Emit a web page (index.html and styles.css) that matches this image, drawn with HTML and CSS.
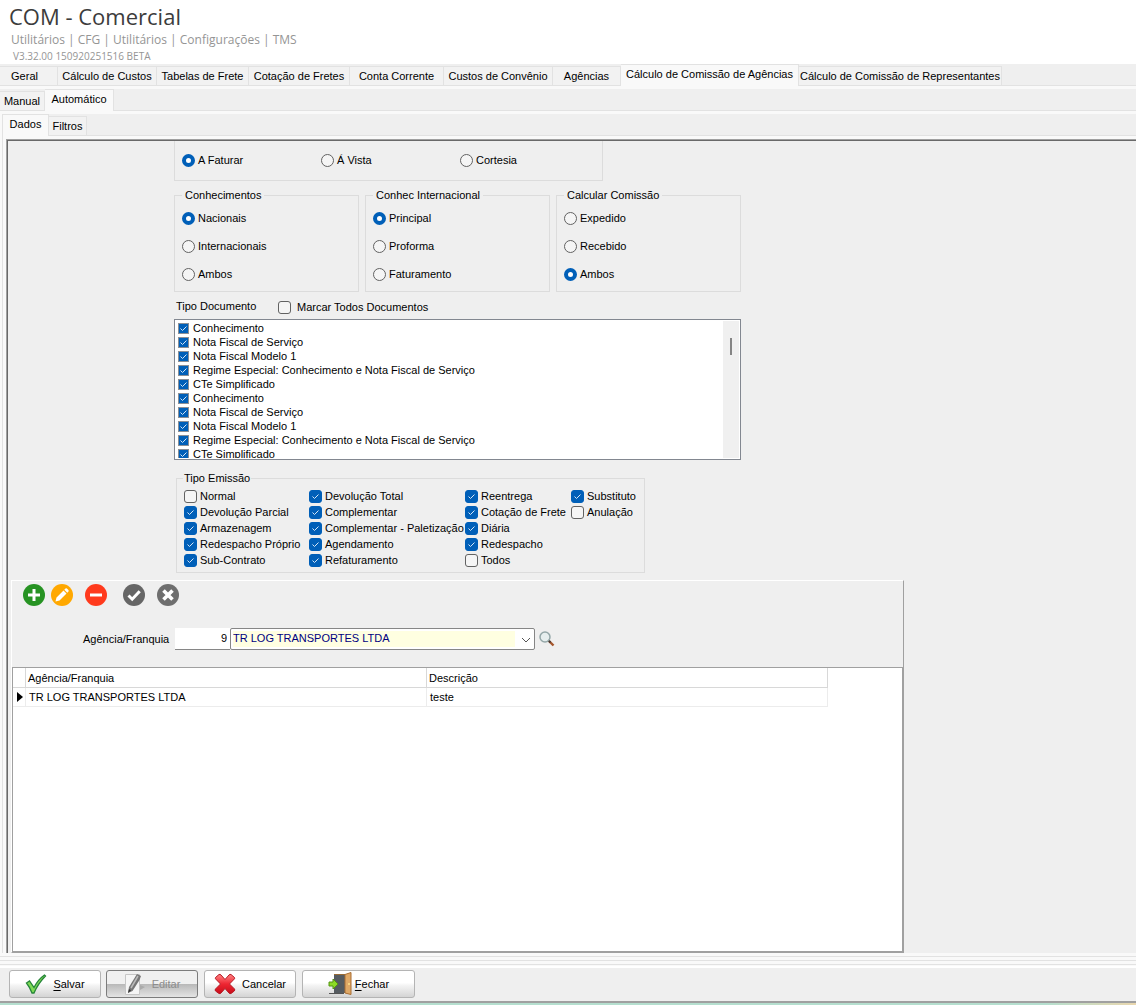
FILE: index.html
```html
<!DOCTYPE html>
<html lang="pt-BR">
<head>
    <meta charset="UTF-8">
    <meta name="viewport" content="width=device-width, initial-scale=1.0">
    <title>COM - Comercial</title>
    <link rel="stylesheet" href="styles.css">
</head>
<body>
    <header class="header">
        <h1>COM - Comercial</h1>
        <p class="path">Utilitários | CFG | Utilitários | Configurações | TMS</p>
        <p class="version">V3.32.00 150920251516 BETA</p>
    </header>

    <!-- Abas -->
    <nav class="tabs tabs-main">
        <button class="tab">Geral</button>
        <button class="tab">Cálculo de Custos</button>
        <button class="tab">Tabelas de Frete</button>
        <button class="tab">Cotação de Fretes</button>
        <button class="tab">Conta Corrente</button>
        <button class="tab">Custos de Convênio</button>
        <button class="tab">Agências</button>
        <button class="tab active">Cálculo de Comissão de Agências</button>
        <button class="tab">Cálculo de Comissão de Representantes</button>
    </nav>
    <nav class="tabs tabs-sub">
        <button class="tab">Manual</button>
        <button class="tab active">Automático</button>
    </nav>
    <div class="page">
        <nav class="tabs tabs-inner">
            <button class="tab active">Dados</button>
            <button class="tab">Filtros</button>
        </nav>

        <main class="panel">
            <div class="form">
                <div class="payment">
                    <label><input type="radio" name="pagamento" checked>A Faturar</label>
                    <label><input type="radio" name="pagamento">Á Vista</label>
                    <label><input type="radio" name="pagamento">Cortesia</label>
                </div>

                <div class="groups">
                    <fieldset class="group">
                        <legend>Conhecimentos</legend>
                        <label><input type="radio" name="conhecimentos" checked>Nacionais</label>
                        <label><input type="radio" name="conhecimentos">Internacionais</label>
                        <label><input type="radio" name="conhecimentos">Ambos</label>
                    </fieldset>
                    <fieldset class="group">
                        <legend>Conhec Internacional</legend>
                        <label><input type="radio" name="internacional" checked>Principal</label>
                        <label><input type="radio" name="internacional">Proforma</label>
                        <label><input type="radio" name="internacional">Faturamento</label>
                    </fieldset>
                    <fieldset class="group">
                        <legend>Calcular Comissão</legend>
                        <label><input type="radio" name="comissao">Expedido</label>
                        <label><input type="radio" name="comissao">Recebido</label>
                        <label><input type="radio" name="comissao" checked>Ambos</label>
                    </fieldset>
                </div>

                <div class="doc-head">
                    <span>Tipo Documento</span>
                    <label><input type="checkbox">Marcar Todos Documentos</label>
                </div>
                <div class="doc-list">
                    <div class="doc-items">
                        <label><input type="checkbox" checked>Conhecimento</label>
                        <label><input type="checkbox" checked>Nota Fiscal de Serviço</label>
                        <label><input type="checkbox" checked>Nota Fiscal Modelo 1</label>
                        <label><input type="checkbox" checked>Regime Especial: Conhecimento e Nota Fiscal de Serviço</label>
                        <label><input type="checkbox" checked>CTe Simplificado</label>
                        <label><input type="checkbox" checked>Conhecimento</label>
                        <label><input type="checkbox" checked>Nota Fiscal de Serviço</label>
                        <label><input type="checkbox" checked>Nota Fiscal Modelo 1</label>
                        <label><input type="checkbox" checked>Regime Especial: Conhecimento e Nota Fiscal de Serviço</label>
                        <label><input type="checkbox" checked>CTe Simplificado</label>
                    </div>
                    <div class="scrollbar"><div class="thumb"></div></div>
                </div>

                <fieldset class="emission">
                    <legend>Tipo Emissão</legend>
                    <div class="emission-grid">
                        <label><input type="checkbox">Normal</label>
                        <label><input type="checkbox" checked>Devolução Parcial</label>
                        <label><input type="checkbox" checked>Armazenagem</label>
                        <label><input type="checkbox" checked>Redespacho Próprio</label>
                        <label><input type="checkbox" checked>Sub-Contrato</label>
                        <label><input type="checkbox" checked>Devolução Total</label>
                        <label><input type="checkbox" checked>Complementar</label>
                        <label><input type="checkbox" checked>Complementar - Paletização</label>
                        <label><input type="checkbox" checked>Agendamento</label>
                        <label><input type="checkbox" checked>Refaturamento</label>
                        <label><input type="checkbox" checked>Reentrega</label>
                        <label><input type="checkbox" checked>Cotação de Frete</label>
                        <label><input type="checkbox" checked>Diária</label>
                        <label><input type="checkbox" checked>Redespacho</label>
                        <label><input type="checkbox">Todos</label>
                        <label><input type="checkbox" checked>Substituto</label>
                        <label><input type="checkbox">Anulação</label>
                    </div>
                </fieldset>
            </div>

            <!-- Agências -->
            <section class="agency">
                <div class="toolbar">
                    <button class="icon-btn" aria-label="Incluir">
                        <svg viewBox="0 0 22 22"><circle cx="11" cy="11" r="11" fill="#279323"/><path d="M11 5v12M5 11h12" stroke="#fff" stroke-width="3"/></svg>
                    </button>
                    <button class="icon-btn" aria-label="Alterar">
                        <svg viewBox="0 0 22 22"><circle cx="11" cy="11" r="11" fill="#ffa800"/><path d="M4.500 17.500l1-4 7-7 3 3-7 7zM13.300 5.700l1.200-1.200q.7-.5 1.400.1l1.500 1.500q.6.700.1 1.400l-1.200 1.200z" fill="#fff"/></svg>
                    </button>
                    <button class="icon-btn icon-remove" aria-label="Excluir">
                        <svg viewBox="0 0 22 22"><circle cx="11" cy="11" r="11" fill="#ff3a1d"/><path d="M5 11h12" stroke="#fff" stroke-width="3"/></svg>
                    </button>
                    <button class="icon-btn icon-confirm" aria-label="Confirmar">
                        <svg viewBox="0 0 22 22"><circle cx="11" cy="11" r="11" fill="#666"/><path d="M5.500 11.500l3.700 3.700 7.500-8" fill="none" stroke="#fff" stroke-width="3"/></svg>
                    </button>
                    <button class="icon-btn icon-cancel" aria-label="Desfazer">
                        <svg viewBox="0 0 22 22"><circle cx="11" cy="11" r="11" fill="#6e6e6e"/><path d="M6.500 6.500l9 9M15.500 6.500l-9 9" stroke="#fff" stroke-width="3.600"/></svg>
                    </button>
                </div>

                <div class="field">
                    <label for="codigo">Agência/Franquia</label>
                    <input class="code" id="codigo" type="text" value="9">
                    <div class="combo">
                        <select aria-label="Nome da agência">
                            <option>TR LOG TRANSPORTES LTDA</option>
                        </select>
                        <svg class="arrow" viewBox="0 0 10 6"><path d="M1 1l4 4 4-4" fill="none" stroke="#555"/></svg>
                    </div>
                    <button class="search" aria-label="Pesquisar">
                        <svg viewBox="0 0 16 16"><path d="M9.500 9.500l5 5" stroke="#a5562c" stroke-width="2.400"/><path d="M9 9l2.500 2.500" stroke="#4a3a35" stroke-width="2"/><circle cx="6" cy="6" r="5" fill="#e6eeee" stroke="#94a7a8" stroke-width="1.500"/></svg>
                    </button>
                </div>

                <div class="grid">
                    <table>
                        <thead>
                            <tr><th class="mark"></th><th>Agência/Franquia</th><th>Descrição</th></tr>
                        </thead>
                        <tbody>
                            <tr>
                                <td class="mark"><svg viewBox="0 0 6 10"><path d="M0 0l6 5-6 5z"/></svg></td>
                                <td>TR LOG TRANSPORTES LTDA</td>
                                <td>teste</td>
                            </tr>
                        </tbody>
                    </table>
                </div>
            </section>
        </main>
    </div>

    <div class="edges"></div>

    <footer class="footer">
        <button class="btn">
            <svg width="22" height="22" viewBox="0 0 22 22"><path d="M1.500 10l3-2 4.500 6.500Q13 6.500 19.500 2l1 1Q13 10.500 9 20H7Q5 14.500 1.500 10z" fill="#7fdb55" stroke="#26853a" stroke-width="1.300"/></svg>
            <span><u>S</u>alvar</span>
        </button>
        <button class="btn btn-disabled" disabled>
            <svg width="22" height="24" viewBox="0 0 22 24"><path d="M16 13l5 2-5 3z" fill="#aaa"/><path d="M1.500 2.500h14v20h-14z" fill="#f5f5f5" stroke="#c6c6c6"/><path d="M4 21l1-6 8-13 4 2-1.500 4-7 11z" fill="#777"/><path d="M7 16l7-12" stroke="#bbb" stroke-width="1.500"/><path d="M4 21l1-4 2 1.500z" fill="#333"/></svg>
            <span>Editar</span>
        </button>
        <button class="btn btn-cancel">
            <svg width="22" height="22" viewBox="0 0 22 22"><defs><linearGradient id="red" x2="0" y2="1"><stop stop-color="#ff8585"/><stop offset=".5" stop-color="#ee2632"/><stop offset="1" stop-color="#c80d1a"/></linearGradient></defs><path d="M1.500 4.500l3.500-3q1-.5 2 .5l4 4.500L15 2q1-1 2-.5l3.500 3q.5.800-.2 1.500L15.500 11l5 5q.7 1-.2 2L17 20.500q-1 .5-2-.5l-4-4.500L7 20q-1 1-2 .5L1.500 18q-.8-1 0-2l5-5-4.800-5q-.7-.7-.2-1.500z" fill="url(#red)" stroke="#b51a25"/></svg>
            <span>Cancelar</span>
        </button>
        <button class="btn btn-close">
            <svg width="24" height="24" viewBox="0 0 24 24"><path d="M1 21.500h15" stroke="#555"/><path d="M6 2h11v19H6z" fill="#555b60"/><path d="M6 2.500h11" stroke="#966a37"/><path d="M17 2.500l6-2v22l-6-1.500z" fill="#dfa866" stroke="#a86d32"/><circle cx="21" cy="12" r="1" fill="#ffe28a"/><path d="M1 10h4V7l5 5-5 5v-3H1z" fill="#8cdb25" stroke="#549414"/></svg>
            <span><u>F</u>echar</span>
        </button>
    </footer>
    <div class="strip"></div>
</body>
</html>
```

FILE: styles.css
```css
* {
    box-sizing: border-box;
}

body {
    font-family: "Liberation Sans", Arial, sans-serif;
    font-size: 11px;
    line-height: 14px;
    color: #000;
    background: #f9f9f9;
    margin: 0;
    display: flex;
    flex-direction: column;
    min-height: 100vh;
}

button,
input,
select {
    font: inherit;
    color: inherit;
    margin: 0;
}

/* Cabeçalho */
.header {
    height: 64px;
    padding: 2px 9px 0;
    background: #fff;
    font-family: "Open Sans", sans-serif;
}

.header h1 {
    margin: 0;
    font-size: 22px;
    line-height: 28px;
    font-weight: 400;
    color: #3c3c3c;
}

.header p {
    margin: 0;
    color: #959595;
}

.header .path {
    padding-left: 2px;
    font-size: 12px;
    line-height: 20px;
}

.header .version {
    padding-left: 4px;
    font-size: 10px;
    line-height: 12px;
}

/* Abas */
.tabs {
    display: grid;
    align-items: end;
    height: 22px;
    margin-bottom: 3px;
    background: #efefef;
    box-shadow: inset 0 -1px #e2e2e2;
}

.tabs-main {
    grid-template-columns: 58px 99px 92px 101px 94px 109px 68px 178px 203px;
}

.tabs-sub {
    grid-template-columns: 45px 69px;
}

.tabs-inner {
    grid-template-columns: 46px 38px;
}

.tab {
    height: 20px;
    padding: 0;
    border: 1px solid #e2e2e2;
    border-left: 0;
    background: #f2f2f2;
    white-space: nowrap;
}

.tab.active {
    height: 22px;
    padding-bottom: 3px;
    border-bottom: 0;
    background: #f9f9f9;
}

.tabs-main .tab:first-child {
    padding-right: 8px;
}

.page {
    flex: 1;
    display: flex;
    flex-direction: column;
    margin-left: 2px;
    border-left: 1px solid #e2e2e2;
}

/* Painel principal */
.panel {
    flex: 1;
    display: flex;
    flex-direction: column;
    margin-left: 3px;
    padding: 1px 0 0 1px;
    border-top: 1px solid #a0a0a0;
    border-left: 1px solid #a0a0a0;
    box-shadow: inset 1px 1px #696969;
    background: #efefef;
}

.form {
    width: 567px;
    margin-left: 166px;
}

.form label {
    display: flex;
    align-items: center;
    gap: 3px;
    white-space: nowrap;
}

fieldset {
    min-width: 0;
    margin: 0;
    border: 1px solid #dcdcdc;
}

legend {
    padding: 0 3px;
}

input[type="radio"],
input[type="checkbox"] {
    appearance: none;
    flex: none;
    width: 13px;
    height: 13px;
    border: 1px solid #626262;
    background: #f5f5f5;
}

input[type="radio"] {
    border-radius: 50%;
}

input[type="radio"]:checked {
    border: 4px solid #005fb8;
    background: #fff;
}

input[type="checkbox"] {
    border-radius: 3px;
}

input[type="checkbox"]:checked {
    border-color: #005fb8;
    background: #005fb8 url("data:image/svg+xml,%3Csvg xmlns='http://www.w3.org/2000/svg' viewBox='0 0 11 11'%3E%3Cpath d='M2.500 5.500l2 2 4-4' fill='none' stroke='%23d5e6f6'/%3E%3C/svg%3E") center / 11px 11px no-repeat;
}

.payment {
    display: grid;
    grid-template-columns: repeat(3, 139px);
    width: 429px;
    height: 40px;
    padding: 0 0 1px 7px;
    border: 1px solid #dcdcdc;
    border-top: 0;
}

.groups {
    display: grid;
    grid-template-columns: repeat(3, 1fr);
    gap: 6px;
    margin-top: 7px;
}

.group {
    height: 104px;
    padding: 2px 7px 0;
}

.group label {
    height: 28px;
}

.group legend,
.emission legend {
    line-height: 14px;
}

.doc-head {
    display: grid;
    grid-template-columns: 102px 1fr;
    height: 26px;
    padding: 7px 2px 0;
}

.doc-head label {
    height: 16px;
    gap: 6px;
}

.doc-list {
    display: flex;
    height: 141px;
    padding: 1px;
    border: 1px solid #828790;
    margin-top: 1px;
    background: #fff;
}

.doc-items {
    flex: 1;
    padding-left: 2px;
    overflow: hidden;
}

.doc-items label {
    height: 14px;
    gap: 4px;
}

.doc-items input[type="checkbox"] {
    width: 11px;
    height: 11px;
    border-radius: 0;
    border-color: #8a8f96;
}

.scrollbar {
    width: 16px;
    background: #f0f0f0;
}

.thumb {
    width: 2px;
    height: 17px;
    margin: 17px 0 0 7px;
    background: #858585;
}

.emission {
    width: 469px;
    height: 102px;
    margin: 11px 0 0 2px;
    padding: 3px 7px 0;
}

.emission legend {
    padding: 0 1px;
    margin-left: -1px;
}

.emission-grid {
    display: grid;
    grid-auto-flow: column;
    grid-template-rows: repeat(5, 16px);
    grid-template-columns: 125px 156px 106px 1fr;
}

/* Agências */
.agency {
    flex: 1;
    display: flex;
    flex-direction: column;
    width: 893px;
    margin: 7px 0 0 3px;
    border: 1px solid #fff;
    border-right-color: #a0a0a0;
    border-bottom-color: #a0a0a0;
}

.toolbar {
    display: flex;
    height: 47px;
    padding: 3px 0 0 11px;
}

.icon-btn,
.search {
    display: block;
    padding: 0;
    border: 0;
    background: none;
}

.icon-btn {
    width: 22px;
    height: 22px;
    margin-right: 6px;
}

.icon-btn svg,
.search svg {
    display: block;
}

.icon-remove {
    margin: 0 16px 0 6px;
}

.icon-confirm {
    margin-right: 12px;
}

.field {
    display: flex;
    align-items: center;
    height: 22px;
    padding-left: 71px;
}

.field label {
    width: 92px;
}

.code {
    width: 55px;
    height: 22px;
    padding: 0 3px 2px;
    border: 0;
    border-bottom: 1px solid #868686;
    background: #fff;
    text-align: right;
}

.combo {
    position: relative;
    width: 305px;
    height: 22px;
    padding: 2px;
    border: 1px solid #868686;
    border-radius: 2px;
    background: #fff;
}

.combo select {
    appearance: none;
    display: block;
    width: 100%;
    height: 16px;
    padding: 0 0 2px;
    border: 0;
    border-right: 17px solid #fff;
    border-radius: 0;
    background: #ffffe1;
    color: #000080;
    line-height: 14px;
}

.arrow {
    position: absolute;
    top: 8px;
    right: 3px;
    width: 10px;
    height: 6px;
    pointer-events: none;
}

.search {
    width: 16px;
    height: 16px;
    margin-left: 4px;
}

.grid {
    flex: 1;
    margin-top: 17px;
    border: 1px solid #a0a0a0;
    background: #fff;
}

.grid table {
    width: 815px;
    table-layout: fixed;
    border-collapse: separate;
    border-spacing: 0;
}

.grid th,
.grid td {
    height: 20px;
    padding: 0 2px;
    border-right: 1px solid #d8d8d8;
    border-bottom: 1px solid #d8d8d8;
    font-weight: 400;
    text-align: left;
}

.grid td {
    height: 19px;
    padding: 0 3px;
    border-color: #ececec;
}

.grid .mark {
    width: 13px;
    padding: 0 2px 0 4px;
}

.mark svg {
    display: block;
    width: 6px;
    height: 10px;
}

/* Rodapé */
.edges {
    height: 15px;
    background: repeating-linear-gradient(#f9f9f9 0 3px, #e2e2e2 3px 4px);
    border-bottom: 2px solid #fff;
}

.footer {
    display: flex;
    gap: 5px;
    height: 35px;
    padding: 2px 9px 0;
    border-bottom: 2px solid #a0a0a0;
    background: #efefef;
}

.btn {
    display: flex;
    align-items: center;
    justify-content: center;
    gap: 6px;
    width: 92px;
    height: 28px;
    padding: 0;
    border: 1px solid #b4b4b4;
    border-radius: 3px;
    background: linear-gradient(#fff 45%, #f4f4f4 55%, #d4d4d4);
}

.btn u {
    text-underline-offset: 2px;
}

.btn-disabled {
    border-color: #7c7c7c;
    background: linear-gradient(#f0f0f0 50%, #b8b8b8 50%, #e4e4e4);
    color: #8c8c8c;
}

.btn-cancel,
.btn-close {
    margin-left: 1px;
}

.btn-close {
    width: 113px;
    gap: 3px;
}

.strip {
    height: 2px;
    background: linear-gradient(90deg, #b5dfcf 92%, #ead7ae);
}
```
